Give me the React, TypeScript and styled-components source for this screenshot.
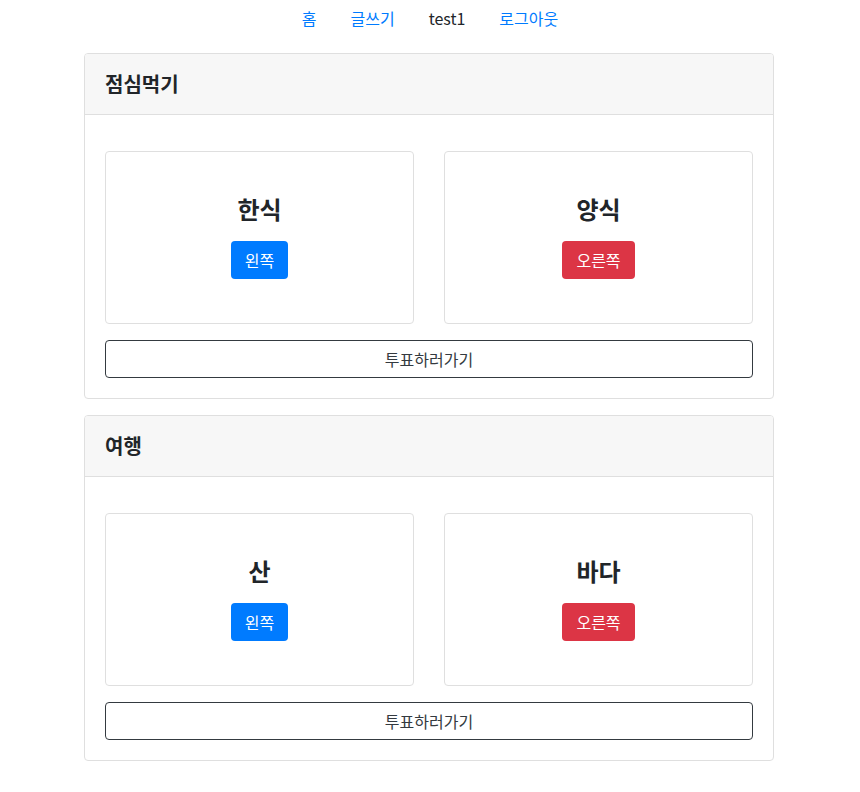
import React from "react";
import styled, { createGlobalStyle } from "styled-components";

const GlobalStyle = createGlobalStyle`
  * { box-sizing: border-box; }
  body {
    margin: 0;
    background: #fff;
    color: #212529;
    font-family: "Noto Sans CJK KR", "Noto Sans", sans-serif;
    font-size: 16px;
    line-height: 1.5;
  }
`;

const Page = styled.div`
  display: flex;
  flex-direction: column;
  align-items: center;
`;

const Nav = styled.nav`
  display: flex;
  justify-content: center;
  height: 37px;
  margin-bottom: 16px;
`;

const NavLink = styled.a<{ $plain?: boolean }>`
  padding: 6px 17px;
  line-height: 24px;
  font-size: 16px;
  color: ${(p) => (p.$plain ? "#212529" : "#007bff")};
  text-decoration: none;
  cursor: pointer;
`;

const List = styled.div`
  width: 690px;
  margin-left: -2px;
  display: flex;
  flex-direction: column;
  gap: 16px;
`;

const Card = styled.section`
  border: 1px solid #dfdfdf;
  border-radius: 4px;
  overflow: hidden;
`;

const CardHeader = styled.header`
  background: #f7f7f7;
  border-bottom: 1px solid #dfdfdf;
  padding: 18px 20px;
`;

const CardTitle = styled.h3`
  margin: 0;
  font-size: 20px;
  line-height: 24px;
  font-weight: 700;
`;

const CardBody = styled.div`
  padding: 36px 20px 20px;
  display: flex;
  flex-direction: column;
  gap: 16px;
`;

const Choices = styled.div`
  display: grid;
  grid-template-columns: 1fr 1fr;
  gap: 30px;
`;

const Choice = styled.div`
  border: 1px solid #dfdfdf;
  border-radius: 4px;
  height: 173px;
  display: flex;
  flex-direction: column;
  align-items: center;
  justify-content: center;
  gap: 18px;
`;

const ChoiceTitle = styled.h4`
  margin: -2px 0 0;
  font-size: 24px;
  line-height: 29px;
  font-weight: 700;
`;

const SideButton = styled.button<{ $variant: "left" | "right" }>`
  border: none;
  border-radius: 4px;
  height: 38px;
  padding: 0 14px;
  font-family: inherit;
  font-size: 16px;
  color: #fff;
  background: ${(p) => (p.$variant === "left" ? "#007bff" : "#dc3545")};
  cursor: pointer;
`;

const VoteButton = styled.button`
  height: 38px;
  width: 100%;
  border: 1px solid #343a40;
  border-radius: 4px;
  background: #fff;
  color: #343a40;
  font-family: inherit;
  font-size: 16px;
  cursor: pointer;
`;

const polls = [
  { title: "점심먹기", left: "한식", right: "양식" },
  { title: "여행", left: "산", right: "바다" },
];

export default function App() {
  return (
    <>
      <GlobalStyle />
      <Page>
        <Nav>
          <NavLink>홈</NavLink>
          <NavLink>글쓰기</NavLink>
          <NavLink $plain>test1</NavLink>
          <NavLink>로그아웃</NavLink>
        </Nav>
        <List>
          {polls.map((p) => (
            <Card key={p.title}>
              <CardHeader>
                <CardTitle>{p.title}</CardTitle>
              </CardHeader>
              <CardBody>
                <Choices>
                  <Choice>
                    <ChoiceTitle>{p.left}</ChoiceTitle>
                    <SideButton $variant="left">왼쪽</SideButton>
                  </Choice>
                  <Choice>
                    <ChoiceTitle>{p.right}</ChoiceTitle>
                    <SideButton $variant="right">오른쪽</SideButton>
                  </Choice>
                </Choices>
                <VoteButton>투표하러가기</VoteButton>
              </CardBody>
            </Card>
          ))}
        </List>
      </Page>
    </>
  );
}
